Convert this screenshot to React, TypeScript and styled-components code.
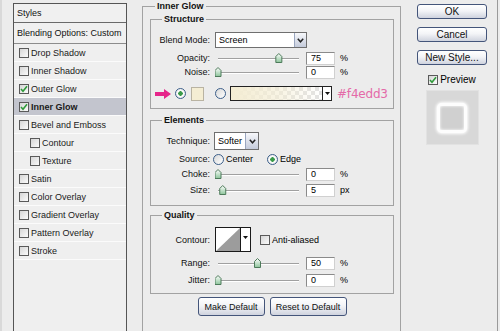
import React from 'react';
import styled, { createGlobalStyle } from 'styled-components';

const Global = createGlobalStyle`
  html, body { margin: 0; padding: 0; background: #ececec; }
  body { font-family: "Liberation Sans", Arial, sans-serif; font-size: 9px; color: #000; }
  * { box-sizing: border-box; }
`;

const Dialog = styled.div`
  width: 500px;
  height: 331px;
  overflow: hidden;
  display: flex;
  background: #ececec;
`;

/* ---------- left list ---------- */
const LeftCol = styled.div`
  flex: 0 0 140px;
  padding: 3px 13px 0 11px;
  border-left: 2px solid #d9d9d9;
`;

const StyleList = styled.div`
  height: 360px;
  border: 1px solid #555;
  background: #efefef;
  display: flex;
  flex-direction: column;
`;

const ListHeader = styled.div<{ $h: number; $line: string }>`
  height: ${p => p.$h}px;
  flex: none;
  display: flex;
  align-items: center;
  padding-left: 3px;
  font-size: 9px;
  color: #111;
  border-bottom: 1px solid ${p => p.$line};
  background: #f0f0f0;
`;

const ListRow = styled.div<{ $indent?: boolean; $selected?: boolean }>`
  height: 18px;
  flex: none;
  display: flex;
  align-items: center;
  gap: 2px;
  padding-left: ${p => (p.$indent ? 16 : 5)}px;
  border-bottom: 1px solid #fbfbfb;
  background: ${p => (p.$selected ? '#c3c5ce' : '#efefef')};
  font-weight: ${p => (p.$selected ? 700 : 400)};
  color: #1a1a1a;
`;

const CheckBox = styled.span`
  width: 10px;
  height: 10px;
  flex: none;
  border: 1px solid #5a5a5a;
  background: linear-gradient(135deg, #d6d6d6, #fbfbfb);
  display: inline-flex;
  align-items: center;
  justify-content: center;
`;

const Check = ({ on }: { on?: boolean }) => (
  <CheckBox>
    {on && (
      <svg width="8" height="8" viewBox="0 0 8 8">
        <path d="M1 4 L3 6.2 L7 1.2" fill="none" stroke="#2f9a3a" strokeWidth="1.6" />
      </svg>
    )}
  </CheckBox>
);

/* ---------- middle ---------- */
const MainCol = styled.div`
  flex: 0 0 265px;
  padding-left: 2px;
`;

const Group = styled.fieldset<{ $outer?: boolean; $mt?: number; $pb?: number }>`
  margin: ${p => p.$mt ?? 0}px 0 0 0;
  min-width: 0;
  width: ${p => (p.$outer ? '259px' : 'auto')};
  padding: 0 ${p => (p.$outer ? '6px' : '0')} ${p => p.$pb ?? 0}px ${p => (p.$outer ? '7px' : '0')};
  border: 1px solid #a2a2a2;
  min-height: ${p => (p.$outer ? '420px' : '0')};
`;

const Legend = styled.legend<{ $ml: number }>`
  margin-left: ${p => p.$ml}px;
  padding: 0 2px;
  font-weight: 700;
  font-size: 9px;
  line-height: 13px;
  background: #ececec;
  color: #111;
`;

const Row = styled.div<{ $h: number; $mt: number }>`
  display: flex;
  align-items: center;
  height: ${p => p.$h}px;
  margin-top: ${p => p.$mt}px;
`;

const Label = styled.span`
  width: 59px;
  flex: none;
  text-align: right;
  margin-right: 5px;
  color: #111;
`;

const Select = styled.div<{ $w: number; $h: number; $aw: number }>`
  width: ${p => p.$w}px;
  height: ${p => p.$h}px;
  flex: none;
  border: 1px solid #6f6f6f;
  background: #fff;
  display: flex;
  align-items: stretch;
  span { flex: 1; padding-left: 3px; display: flex; align-items: center; }
  i {
    width: ${p => p.$aw}px;
    flex: none;
    border-left: 1px solid #9aa6bf;
    background: linear-gradient(#f7f8fb, #c4cbdb);
    display: flex;
    align-items: center;
    justify-content: center;
  }
`;

const Chevron = () => (
  <svg width="7" height="5" viewBox="0 0 7 5">
    <path d="M0.8 0.8 L3.5 3.8 L6.2 0.8" fill="none" stroke="#222" strokeWidth="1.5" />
  </svg>
);

const Input = styled.div`
  width: 29px;
  height: 13px;
  flex: none;
  margin-left: 5px;
  border: 1px solid #8a8a8a;
  border-right-color: #d0d0d0;
  border-bottom-color: #d0d0d0;
  background: #fff;
  padding-left: 4px;
  display: flex;
  align-items: center;
  font-size: 9px;
`;

const Unit = styled.span`
  margin-left: 5px;
  font-size: 9px;
`;

const Slider = ({ pct }: { pct: number }) => {
  const x = 3 + pct * 79;
  return (
    <svg width="86" height="12" viewBox="0 0 86 12" style={{ flex: 'none' }}>
      <defs>
        <linearGradient id="th" x1="0" y1="0" x2="0" y2="1">
          <stop offset="0" stopColor="#ffffff" />
          <stop offset="1" stopColor="#8cc49a" />
        </linearGradient>
      </defs>
      <line x1="3" y1="6.5" x2="84" y2="6.5" stroke="#a0a0a0" />
      <line x1="3" y1="7.5" x2="84" y2="7.5" stroke="#ffffff" />
      <path
        d={`M${x - 3} 4.5 L${x} 1.5 L${x + 3} 4.5 L${x + 3} 10.5 L${x - 3} 10.5 Z`}
        fill="url(#th)"
        stroke="#4d7a5a"
        strokeWidth="1"
      />
    </svg>
  );
};

const RadioDot = styled.span<{ $on?: boolean; $ml?: number }>`
  width: 11px;
  height: 11px;
  flex: none;
  margin-left: ${p => p.$ml ?? 0}px;
  border-radius: 50%;
  border: 1px solid #3c5f8a;
  background: ${p =>
    p.$on
      ? 'radial-gradient(circle, #3a9a4a 0 2px, #fff 2.5px, #dcdcdc 100%)'
      : 'linear-gradient(135deg, #d8d8d8, #fff)'};
`;

const Arrow = styled.svg`
  flex: none;
  margin-left: 4px;
`;

const Swatch = styled.span`
  width: 13px;
  height: 14px;
  flex: none;
  margin-left: 5px;
  background: #f4edd3;
  border: 1px solid #b9b3a2;
`;

const Gradient = styled.div`
  width: 102px;
  height: 15px;
  flex: none;
  margin-left: 4px;
  border: 1px solid #222;
  display: flex;
  span {
    flex: 1;
    background:
      linear-gradient(90deg, #f4edd3 0%, rgba(244, 237, 211, 0.6) 55%, rgba(244, 237, 211, 0) 100%),
      repeating-conic-gradient(#e2e2e2 0 25%, #ffffff 0 50%) 0 0 / 8px 8px;
  }
  i {
    width: 9px;
    flex: none;
    border-left: 1px solid #222;
    background: #fff;
    display: flex;
    align-items: center;
    justify-content: center;
  }
`;

const SmallTri = () => (
  <svg width="5" height="3" viewBox="0 0 5 3">
    <path d="M0 0 L5 0 L2.5 3 Z" fill="#111" />
  </svg>
);

const HexText = styled.span`
  margin-left: 5px;
  font-family: "DejaVu Sans", sans-serif;
  font-size: 12px;
  color: #e46aa8;
  letter-spacing: -0.2px;
`;

const RadioText = styled.span`
  margin-left: 2px;
  font-size: 9px;
`;

const Contour = styled.div`
  width: 36px;
  height: 25px;
  flex: none;
  border: 1px solid #1a1a1a;
  background: #fff;
  display: flex;
  svg { flex: none; }
  i {
    width: 10px;
    flex: none;
    border-left: 1px solid #1a1a1a;
    display: flex;
    align-items: flex-start;
    padding-top: 8px;
    justify-content: center;
  }
`;

const AntiAlias = styled.span`
  margin-left: 9px;
  display: flex;
  align-items: center;
  gap: 2px;
`;

const ButtonRow = styled.div`
  display: flex;
  justify-content: center;
  gap: 5px;
  margin-top: 3px;
`;

const Button = styled.div<{ $w: number; $h: number; $fs: number }>`
  width: ${p => p.$w}px;
  height: ${p => p.$h}px;
  flex: none;
  border: 1px solid #44557a;
  border-radius: 3px;
  background: linear-gradient(#ffffff 0%, #f3f4f7 45%, #cfd3de 100%);
  display: flex;
  align-items: center;
  justify-content: center;
  font-size: ${p => p.$fs}px;
  color: #111;
`;

/* ---------- right ---------- */
const SideCol = styled.div`
  flex: 0 0 93px;
  border-right: 1px solid #9a9a9a;
  padding: 4px 0 0 12px;
  display: flex;
  flex-direction: column;
  align-items: flex-start;
`;

const SideInner = styled.div`
  width: 70px;
  display: flex;
  flex-direction: column;
  align-items: center;
  gap: 8px;
`;

const PreviewRow = styled.div`
  display: flex;
  align-items: center;
  gap: 2px;
  font-size: 10px;
  margin-top: 1px;
`;

const PreviewBox = styled.div`
  width: 53px;
  height: 55px;
  margin-top: -3px;
  background: #d8d8d8;
  border: 1px solid #e2e2e2;
  display: flex;
  align-items: center;
  justify-content: center;
`;

const GlowSquare = styled.div`
  width: 30px;
  height: 30px;
  border-radius: 5px;
  border: 3px solid #fdfdfd;
  background: #d0d0d0;
  box-shadow: 0 0 3px 1px #ffffff, inset 0 0 3px #ffffff;
`;

const items = [
  { label: 'Drop Shadow' },
  { label: 'Inner Shadow' },
  { label: 'Outer Glow', on: true },
  { label: 'Inner Glow', on: true, selected: true },
  { label: 'Bevel and Emboss' },
  { label: 'Contour', indent: true },
  { label: 'Texture', indent: true },
  { label: 'Satin' },
  { label: 'Color Overlay' },
  { label: 'Gradient Overlay' },
  { label: 'Pattern Overlay' },
  { label: 'Stroke' },
];

export default function App() {
  return (
    <>
      <Global />
      <Dialog>
        <LeftCol>
          <StyleList>
            <ListHeader $h={19} $line="#6a6a6a">Styles</ListHeader>
            <ListHeader $h={21} $line="#8c8c8c">Blending Options: Custom</ListHeader>
            {items.map(it => (
              <ListRow key={it.label} $indent={it.indent} $selected={it.selected}>
                <Check on={it.on} />
                <span>{it.label}</span>
              </ListRow>
            ))}
          </StyleList>
        </LeftCol>

        <MainCol>
          <Group $outer>
            <Legend $ml={5}>Inner Glow</Legend>

            <Group $pb={7}>
              <Legend $ml={11}>Structure</Legend>
              <Row $h={16} $mt={6}>
                <Label>Blend Mode:</Label>
                <Select $w={92} $h={16} $aw={12}>
                  <span>Screen</span>
                  <i><Chevron /></i>
                </Select>
              </Row>
              <Row $h={14} $mt={3}>
                <Label>Opacity:</Label>
                <Slider pct={0.77} />
                <Input>75</Input>
                <Unit>%</Unit>
              </Row>
              <Row $h={14} $mt={0}>
                <Label>Noise:</Label>
                <Slider pct={0} />
                <Input>0</Input>
                <Unit>%</Unit>
              </Row>
              <Row $h={15} $mt={7}>
                <Arrow width="16" height="10" viewBox="0 0 16 10">
                  <path d="M0 3 L9 3 L9 0 L16 5 L9 10 L9 7 L0 7 Z" fill="#e6258a" />
                </Arrow>
                <RadioDot $on $ml={4} />
                <Swatch />
                <RadioDot $ml={11} />
                <Gradient>
                  <span />
                  <i><SmallTri /></i>
                </Gradient>
                <HexText>#f4edd3</HexText>
              </Row>
            </Group>

            <Group $mt={5} $pb={8}>
              <Legend $ml={11}>Elements</Legend>
              <Row $h={18} $mt={5}>
                <Label>Technique:</Label>
                <Select $w={45} $h={18} $aw={13} style={{ marginLeft: -1 }}>
                  <span>Softer</span>
                  <i><Chevron /></i>
                </Select>
              </Row>
              <Row $h={14} $mt={2}>
                <Label>Source:</Label>
                <RadioDot $ml={-2} />
                <RadioText>Center</RadioText>
                <RadioDot $on $ml={14} />
                <RadioText>Edge</RadioText>
              </Row>
              <Row $h={14} $mt={1}>
                <Label>Choke:</Label>
                <Slider pct={0} />
                <Input>0</Input>
                <Unit>%</Unit>
              </Row>
              <Row $h={14} $mt={2}>
                <Label>Size:</Label>
                <Slider pct={0.06} />
                <Input>5</Input>
                <Unit>px</Unit>
              </Row>
            </Group>

            <Group $mt={3} $pb={6}>
              <Legend $ml={11}>Quality</Legend>
              <Row $h={25} $mt={5}>
                <Label>Contour:</Label>
                <Contour>
                  <svg width="24" height="23" viewBox="0 0 24 23">
                    <path d="M0 23 L24 0 L24 23 Z" fill="#9c9c9c" />
                  </svg>
                  <i><SmallTri /></i>
                </Contour>
                <AntiAlias>
                  <Check />
                  <span>Anti-aliased</span>
                </AntiAlias>
              </Row>
              <Row $h={14} $mt={4}>
                <Label>Range:</Label>
                <Slider pct={0.5} />
                <Input>50</Input>
                <Unit>%</Unit>
              </Row>
              <Row $h={14} $mt={3}>
                <Label>Jitter:</Label>
                <Slider pct={0} />
                <Input>0</Input>
                <Unit>%</Unit>
              </Row>
            </Group>

            <ButtonRow>
              <Button $w={67} $h={19} $fs={9}>Make Default</Button>
              <Button $w={77} $h={19} $fs={9}>Reset to Default</Button>
            </ButtonRow>
          </Group>
        </MainCol>

        <SideCol>
          <SideInner>
            <Button $w={70} $h={15} $fs={10}>OK</Button>
            <Button $w={70} $h={15} $fs={10}>Cancel</Button>
            <Button $w={70} $h={15} $fs={10}>New Style...</Button>
            <PreviewRow>
              <Check on />
              <span>Preview</span>
            </PreviewRow>
            <PreviewBox>
              <GlowSquare />
            </PreviewBox>
          </SideInner>
        </SideCol>
      </Dialog>
    </>
  );
}
